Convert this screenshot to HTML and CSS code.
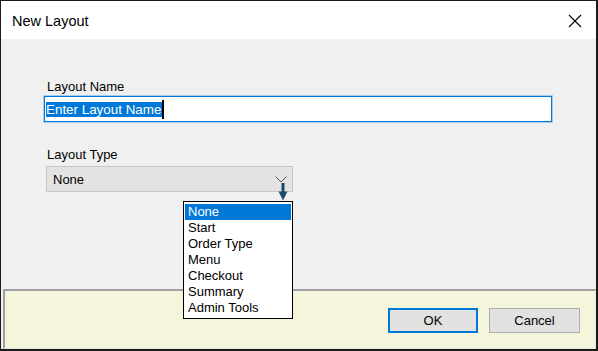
FILE: index.html
```html
<!DOCTYPE html>
<html lang="en">
<head>
  <meta charset="UTF-8">
  <title>New Layout</title>
  <link rel="stylesheet" href="styles.css">
</head>
<body>
<div class="window">
  <div class="titlebar">
    <span class="title">New Layout</span>
    <svg class="close" width="14" height="14" viewBox="0 0 14 14">
      <path d="M1 1 L13 13 M13 1 L1 13" stroke="#000" stroke-width="1.1" fill="none"/>
    </svg>
  </div>
  <div class="content">
    <div class="field">
      <div class="label">Layout Name</div>
      <div class="textbox"><span class="selected">Enter Layout Name</span><span class="caret"></span></div>
    </div>
    <div class="field type-field">
      <div class="label">Layout Type</div>
      <div class="combo">
        <span>None</span>
        <svg class="chevron" width="12" height="7" viewBox="0 0 12 7">
          <path d="M0.5 0.5 L6 6 L11.5 0.5" stroke="#555" stroke-width="1" fill="none"/>
        </svg>
        <svg class="pointer" width="10" height="18" viewBox="0 0 10 18">
          <rect x="3.5" y="0" width="3" height="10" fill="#1b4d6b"/>
          <path d="M0.5 8.5 L9.5 8.5 L5 17.5 Z" fill="#1b4d6b"/>
        </svg>
        <ul class="dropdown">
          <li class="active">None</li>
          <li>Start</li>
          <li>Order Type</li>
          <li>Menu</li>
          <li>Checkout</li>
          <li>Summary</li>
          <li>Admin Tools</li>
        </ul>
      </div>
    </div>
  </div>
  <div class="footer">
    <button class="btn ok">OK</button>
    <button class="btn">Cancel</button>
  </div>
</div>
</body>
</html>
```

FILE: styles.css
```css
body {
  margin: 0;
  font-family: "Liberation Sans", Arial, sans-serif;
  background: #fff;
}
.window {
  width: 598px;
  height: 351px;
  box-sizing: border-box;
  border: 1px solid #1a1a1a;
  border-right-width: 2px;
  border-bottom-width: 2px;
  display: flex;
  flex-direction: column;
  background: #f0f0f0;
}
.titlebar {
  height: 38px;
  background: #fff;
  display: flex;
  align-items: center;
  justify-content: space-between;
  padding: 0 14px 0 11px;
  flex-shrink: 0;
}
.title {
  font-size: 14.5px;
  color: #000;
  margin-top: 1px;
}
.close {
  margin-top: 1px;
}
.content {
  flex: 1;
  padding: 40px 0 0 43px;
  font-size: 13px;
}
.label {
  margin-left: 3px;
  line-height: 15px;
  height: 15px;
  color: #000;
}
.textbox {
  margin-top: 2px;
  width: 508px;
  height: 26px;
  box-sizing: border-box;
  background: #fff;
  border: 1px solid #0078d7;
  box-shadow: 0 0 0 1px rgba(0, 120, 215, 0.3);
  display: flex;
  align-items: center;
  padding-left: 1px;
  font-size: 13.4px;
}
.selected {
  background: #0078d7;
  color: #fff;
  line-height: 15px;
  padding-right: 1px;
}
.caret {
  width: 2px;
  height: 19px;
  background: #000;
}
.type-field {
  margin-top: 25px;
}
.combo {
  position: relative;
  margin: 4px 0 0 2px;
  width: 247px;
  height: 26px;
  box-sizing: border-box;
  border: 1px solid #c6c6c6;
  background: #e3e3e3;
  display: flex;
  align-items: center;
  justify-content: space-between;
  padding: 0 5px 0 6px;
}
.chevron {
  margin-top: 1px;
}
.pointer {
  position: absolute;
  left: 231px;
  top: 16px;
}
.dropdown {
  position: absolute;
  left: 136px;
  top: 34px;
  width: 110px;
  margin: 0;
  padding: 2px 1px;
  list-style: none;
  box-sizing: border-box;
  background: #fff;
  border: 1px solid #000;
  z-index: 5;
}
.dropdown li {
  height: 16px;
  line-height: 16px;
  padding-left: 3px;
  color: #000;
}
.dropdown li.active {
  background: #0078d7;
  color: #fff;
}
.footer {
  height: 60px;
  box-sizing: border-box;
  margin-left: 2px;
  background: #f5f5dc;
  border-top: 2px solid #a0a0a0;
  border-left: 2px solid #a0a0a0;
  border-right: 1px solid #e6e6e6;
  border-bottom: 1px solid #e6e6e6;
  display: flex;
  justify-content: flex-end;
  align-items: flex-start;
  gap: 11px;
  padding: 17px 15px 0 0;
}
.btn {
  width: 91px;
  height: 25px;
  box-sizing: border-box;
  background: #e1e1e1;
  border: 1px solid #adadad;
  font-family: "Liberation Sans", Arial, sans-serif;
  font-size: 13px;
  color: #000;
  padding: 0;
}
.btn.ok {
  width: 90px;
  border: 2px solid #0078d7;
}
```
